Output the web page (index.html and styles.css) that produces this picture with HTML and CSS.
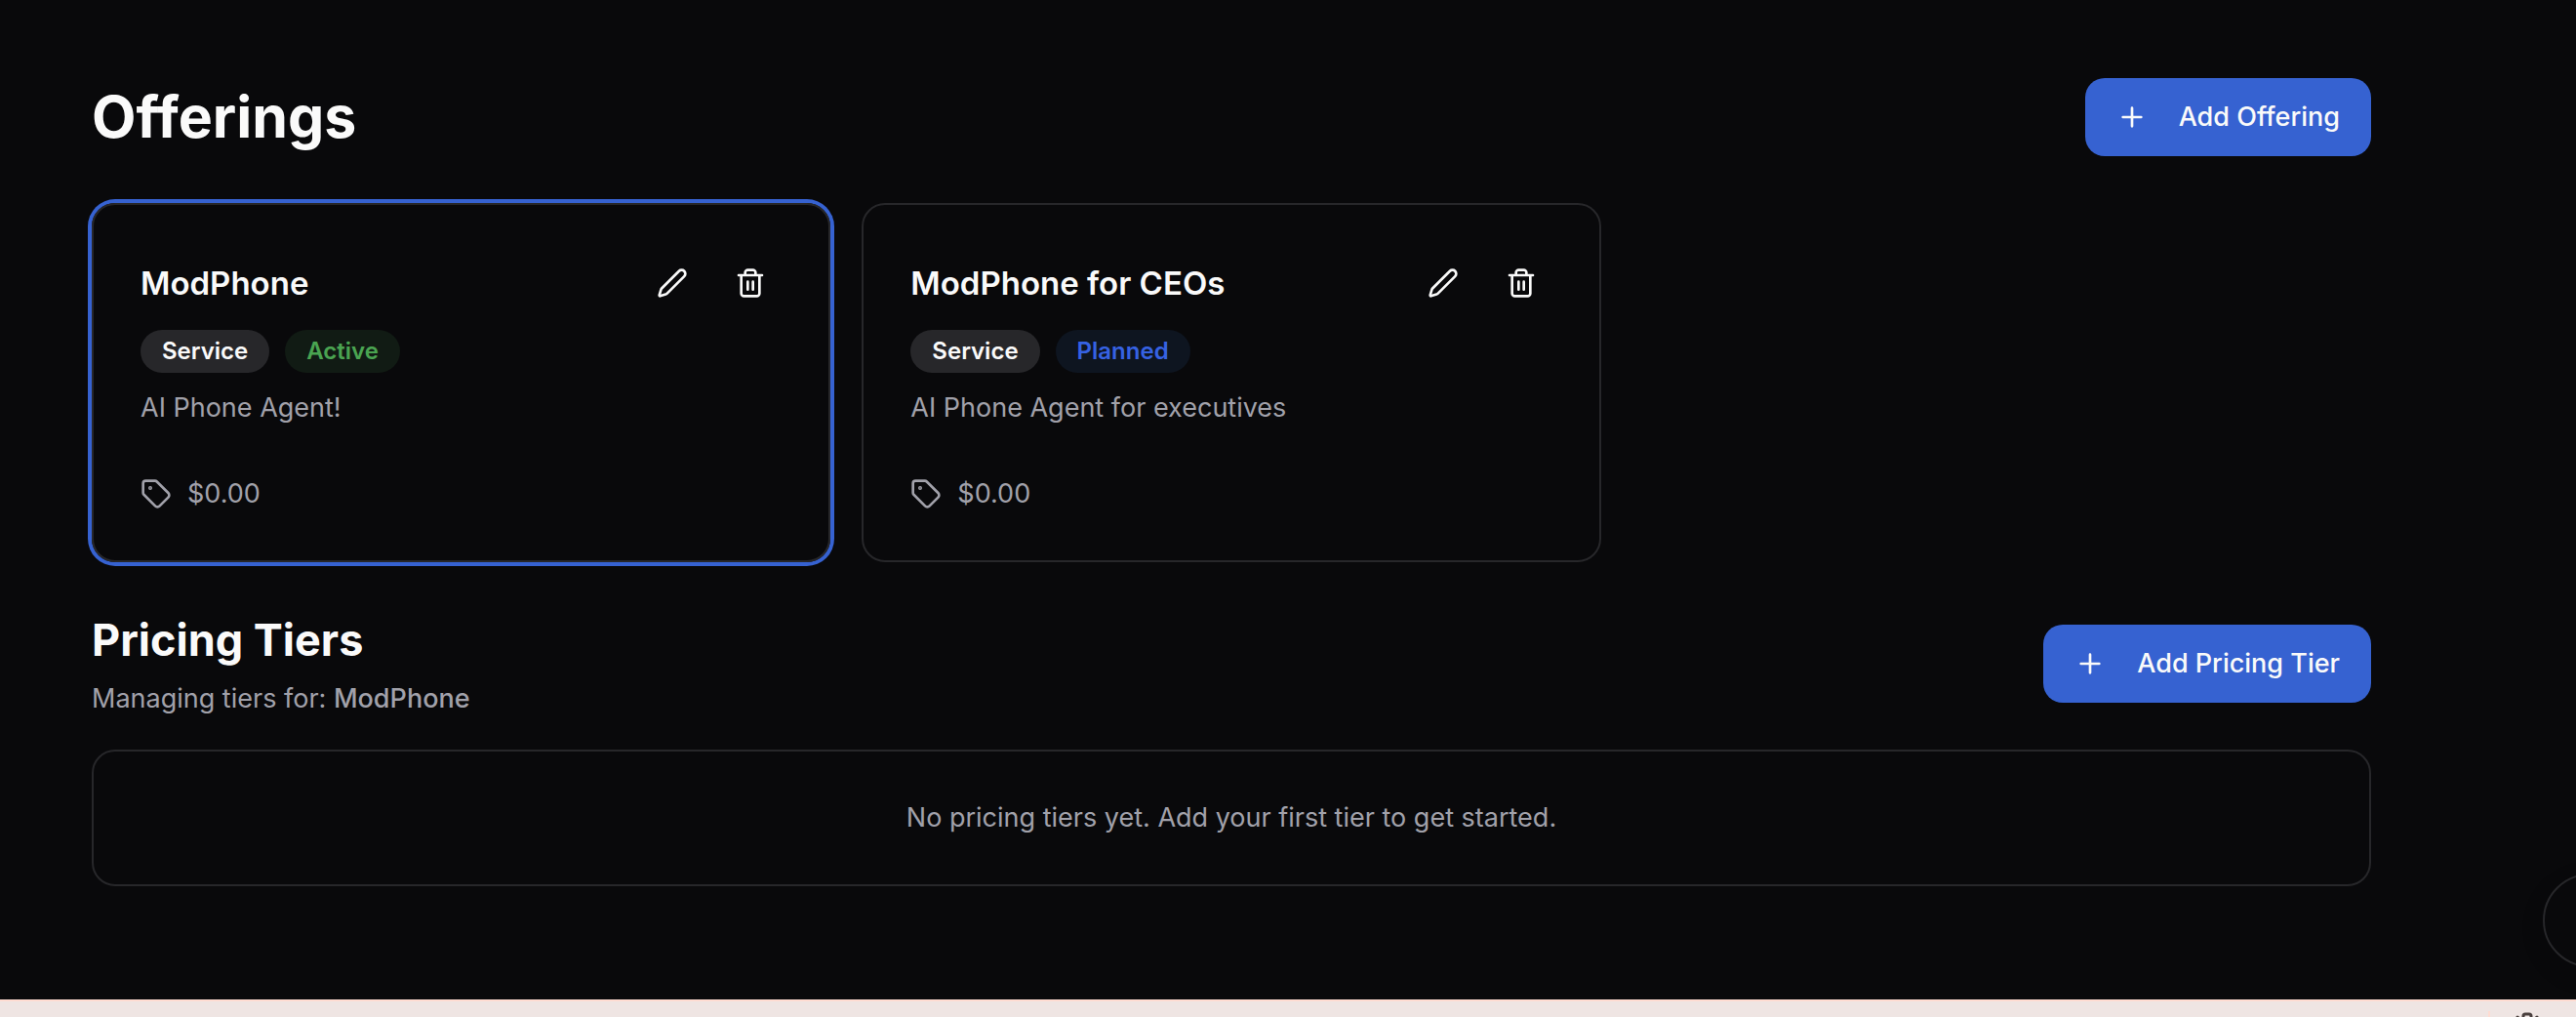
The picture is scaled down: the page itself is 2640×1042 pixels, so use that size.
FILE: index.html
```html
<!DOCTYPE html>
<html lang="en">
<head>
<meta charset="utf-8">
<meta name="viewport" content="width=device-width, initial-scale=1">
<title>Offerings</title>
<link rel="stylesheet" href="styles.css">
</head>
<body>
<svg class="sprite" aria-hidden="true">
  <symbol id="plus" viewBox="0 0 24 24"><path d="M5 12h14M12 5v14"/></symbol>
  <symbol id="pencil" viewBox="0 0 24 24"><path d="M21.174 6.812a1 1 0 0 0-3.986-3.987L3.842 16.174a2 2 0 0 0-.5.83l-1.321 4.352a.5.5 0 0 0 .623.622l4.353-1.32a2 2 0 0 0 .83-.497z"/></symbol>
  <symbol id="trash" viewBox="0 0 24 24"><path d="M3 6h18M19 6v14c0 1-1 2-2 2H7c-1 0-2-1-2-2V6M8 6V4c0-1 1-2 2-2h4c1 0 2 1 2 2v2M10 11v6M14 11v6"/></symbol>
  <symbol id="tag" viewBox="0 0 24 24"><path d="M12.586 2.586A2 2 0 0 0 11.172 2H4a2 2 0 0 0-2 2v7.172a2 2 0 0 0 .586 1.414l8.704 8.704a2.426 2.426 0 0 0 3.420 0l6.580-6.580a2.426 2.426 0 0 0 0-3.420z"/><circle cx="7.500" cy="7.500" r=".5" fill="currentColor"/></symbol>
</svg>
<div class="panel">
  <main class="content">
    <header class="head">
      <h1 class="title">Offerings</h1>
      <button class="btn" type="button"><svg class="icon"><use href="#plus"/></svg>Add Offering</button>
    </header>
    <div class="cards">
      <article class="card card-selected">
        <div class="card-head">
          <h3 class="card-title">ModPhone</h3>
          <div class="actions">
            <button class="icon-btn" type="button" aria-label="Edit ModPhone"><svg class="icon"><use href="#pencil"/></svg></button>
            <button class="icon-btn" type="button" aria-label="Delete ModPhone"><svg class="icon"><use href="#trash"/></svg></button>
          </div>
        </div>
        <div class="badges"><span class="badge">Service</span><span class="badge badge-active">Active</span></div>
        <p class="muted">AI Phone Agent!</p>
        <p class="price muted"><svg class="icon"><use href="#tag"/></svg>$0.00</p>
      </article>
      <article class="card">
        <div class="card-head">
          <h3 class="card-title">ModPhone for CEOs</h3>
          <div class="actions">
            <button class="icon-btn" type="button" aria-label="Edit ModPhone for CEOs"><svg class="icon"><use href="#pencil"/></svg></button>
            <button class="icon-btn" type="button" aria-label="Delete ModPhone for CEOs"><svg class="icon"><use href="#trash"/></svg></button>
          </div>
        </div>
        <div class="badges"><span class="badge">Service</span><span class="badge badge-planned">Planned</span></div>
        <p class="muted">AI Phone Agent for executives</p>
        <p class="price muted"><svg class="icon"><use href="#tag"/></svg>$0.00</p>
      </article>
    </div>
    <section class="tiers">
      <header class="head">
        <div class="tiers-text">
          <h2 class="subtitle">Pricing Tiers</h2>
          <p class="muted">Managing tiers for: <strong class="strong">ModPhone</strong></p>
        </div>
        <button class="btn" type="button"><svg class="icon"><use href="#plus"/></svg>Add Pricing Tier</button>
      </header>
      <p class="empty muted">No pricing tiers yet. Add your first tier to get started.</p>
    </section>
  </main>
  <button class="bubble" type="button" aria-label="Open chat"></button>
</div>
<footer class="strip">
  <span class="divider"></span>
  <svg class="strip-icon" viewBox="0 0 28 28" aria-hidden="true"><path d="M10 8V5a2 2 0 0 1 2-2h4a2 2 0 0 1 2 2v3M4 6l3 3M24 6l-3 3"/></svg>
</footer>
</body>
</html>
```

FILE: styles.css
```css
* { box-sizing: border-box; }

body {
  display: flex;
  flex-direction: column;
  height: 100vh;
  margin: 0;
  overflow: hidden;
  background: #09090b;
  color: #fafafa;
  font: 400 27px/40px Inter, "Liberation Sans", sans-serif;
}

h1, h2, h3, p { margin: 0; }

.sprite { position: absolute; width: 0; height: 0; }

.panel {
  position: relative;
  flex: 1;
  overflow: hidden;
}

.content {
  display: flex;
  flex-direction: column;
  gap: 48px;
  padding: 80px 210px 0 94px;
}

.head {
  display: flex;
  align-items: center;
  justify-content: space-between;
}

.title { font-size: 59px; line-height: 72px; font-weight: 700; }
.subtitle { font-size: 45px; line-height: 64px; font-weight: 700; }

.icon {
  flex: none;
  width: 32px;
  height: 32px;
  fill: none;
  stroke: currentColor;
  stroke-width: 2;
  stroke-linecap: round;
  stroke-linejoin: round;
}

.btn {
  display: flex;
  align-items: center;
  gap: 32px;
  height: 80px;
  padding: 0 32px;
  border: 0;
  border-radius: 20px;
  background: #3662d1;
  color: #fafafa;
  font: inherit;
  font-weight: 500;
}

.cards {
  display: grid;
  grid-template-columns: repeat(3, 1fr);
  gap: 32px;
}

.card {
  display: flex;
  flex-direction: column;
  gap: 16px;
  padding: 48px;
  border: 2px solid #27272a;
  border-radius: 24px;
}

.card-selected { box-shadow: 0 0 0 4px #3662d1; }

.card-head {
  display: flex;
  align-items: center;
  justify-content: space-between;
}

.card-title { font-size: 33px; line-height: 40px; font-weight: 600; }

.actions { display: flex; gap: 16px; }

.icon-btn {
  display: grid;
  place-items: center;
  width: 64px;
  height: 64px;
  padding: 0;
  border: 0;
  background: none;
  color: #fafafa;
}

.badges { display: flex; gap: 16px; }

.badge {
  padding: 6px 22px;
  border-radius: 22px;
  background: #27272a;
  font-size: 24px;
  line-height: 32px;
  font-weight: 600;
}

.badge-active { background: #111b14; color: #4aa451; }
.badge-planned { background: #0e1520; color: #3662e3; }

.muted { color: #a1a1aa; }

.price {
  display: flex;
  align-items: center;
  gap: 16px;
  margin-top: 32px;
}

.tiers { display: flex; flex-direction: column; gap: 32px; }
.tiers-text { display: flex; flex-direction: column; gap: 8px; }
.strong { font-weight: 500; }

.empty {
  padding: 48px;
  border: 2px solid #27272a;
  border-radius: 24px;
  text-align: center;
}

.bubble {
  position: absolute;
  right: -62px;
  bottom: 33px;
  width: 96px;
  height: 96px;
  border: 2px solid #27272a;
  border-radius: 50%;
  background: #09090b;
  box-shadow: 0 8px 24px #00000022;
}

.strip {
  display: flex;
  justify-content: flex-end;
  height: 18px;
  padding-right: 36px;
  overflow: hidden;
  border-top: 2px solid #ffdcd2;
  background: #efe5e3;
}

.divider { width: 2px; margin: 10px 24px 0 0; background: #ffdcd2; }

.strip-icon {
  flex: none;
  width: 28px;
  height: 28px;
  margin-top: 10px;
  fill: none;
  stroke: #4a403e;
  stroke-width: 3;
  stroke-linecap: round;
}
```
